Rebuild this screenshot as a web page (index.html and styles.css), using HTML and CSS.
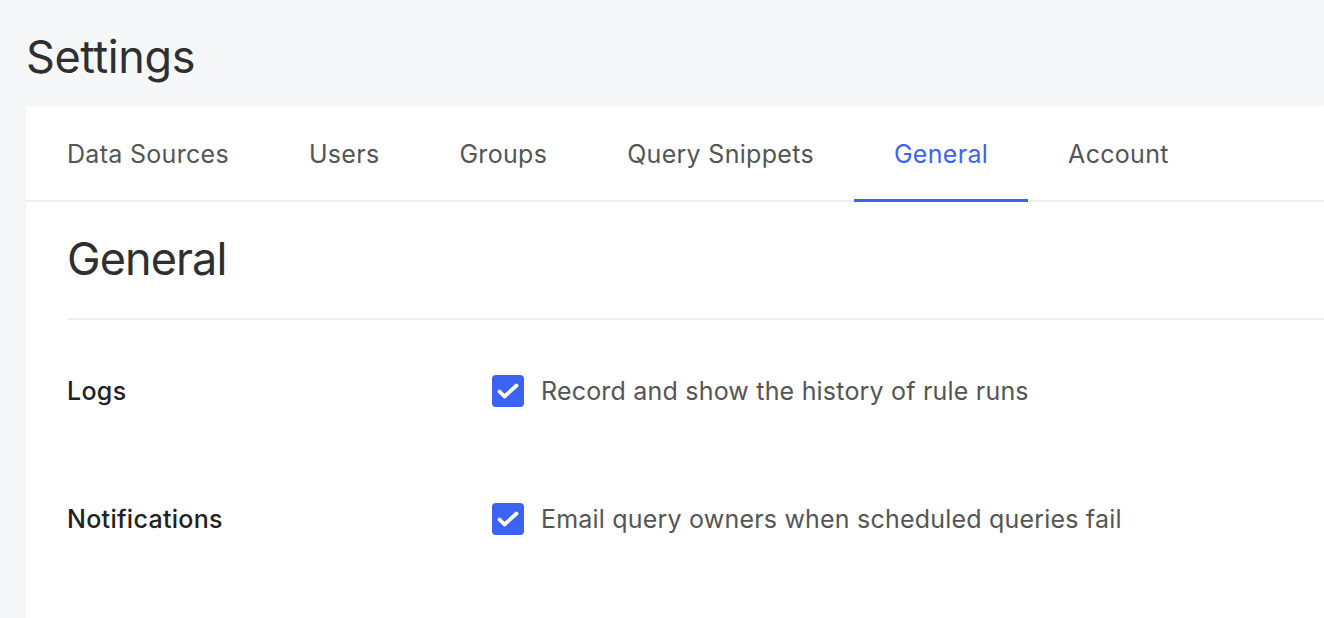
FILE: index.html
```html
<!DOCTYPE html>
<html lang="en">
<head>
<meta charset="utf-8">
<title>Settings</title>
<link rel="stylesheet" href="styles.css">
</head>
<body>
<div class="page">
  <h1 class="page-title">Settings</h1>
  <div class="card">
    <nav class="tabs">
      <a class="tab">Data Sources</a>
      <a class="tab">Users</a>
      <a class="tab">Groups</a>
      <a class="tab">Query Snippets</a>
      <a class="tab active">General</a>
      <a class="tab">Account</a>
    </nav>
    <div class="content">
      <h2 class="section-title">General</h2>
      <div class="rows">
        <div class="row">
          <div class="label">Logs</div>
          <label class="check">
            <span class="box"><svg viewBox="0 0 32 32" width="32" height="32"><path d="M7.5 16.5L12.5 21.5L24.5 10.5" fill="none" stroke="#fff" stroke-width="3.8" stroke-linecap="round" stroke-linejoin="round"/></svg></span>
            <span class="check-text">Record and show the history of rule runs</span>
          </label>
        </div>
        <div class="row">
          <div class="label">Notifications</div>
          <label class="check">
            <span class="box"><svg viewBox="0 0 32 32" width="32" height="32"><path d="M7.5 16.5L12.5 21.5L24.5 10.5" fill="none" stroke="#fff" stroke-width="3.8" stroke-linecap="round" stroke-linejoin="round"/></svg></span>
            <span class="check-text">Email query owners when scheduled queries fail</span>
          </label>
        </div>
      </div>
    </div>
  </div>
</div>
</body>
</html>
```
FILE: styles.css
```css
* { box-sizing: border-box; }
html, body { margin: 0; padding: 0; }
body {
  background: #f6f7f9;
  font-family: Inter, "Noto Sans", "Liberation Sans", sans-serif;
  color: #333;
  overflow: hidden;
  height: 618px;
}
.page {
  padding-left: 26px;
}
.page-title {
  margin: 0;
  padding: 30px 0 0 0;
  height: 106px;
  font-size: 45px;
  line-height: 54px;
  font-weight: 400;
  letter-spacing: -0.4px;
  color: #2f2f2f;
}
.card {
  background: #fff;
  height: 520px;
  box-shadow: -1px 0 2px rgba(0,0,0,0.03);
}
.tabs {
  display: flex;
  padding-left: 1px;
  height: 96px;
  border-bottom: 2px solid #eeeeee;
}
.tab {
  display: flex;
  align-items: center;
  padding: 3px 40px 0;
  font-size: 25px;
  letter-spacing: 0.3px;
  color: #555;
  margin-bottom: -2px;
  border-bottom: 3px solid transparent;
}
.tab.active {
  color: #3b63f5;
  border-bottom-color: #3b63f5;
}
.content {
  padding-left: 41px;
}
.section-title {
  margin: 0;
  padding-top: 30px;
  height: 118px;
  font-size: 45px;
  line-height: 54px;
  font-weight: 400;
  letter-spacing: -0.9px;
  color: #2f2f2f;
  border-bottom: 2px solid #eeeeee;
}
.rows {
  padding-top: 7px;
}
.row {
  display: flex;
  align-items: center;
  height: 128px;
}
.label {
  width: 425px;
  font-size: 25px;
  font-weight: 500;
  letter-spacing: 0.3px;
  color: #222;
}
.check {
  display: flex;
  align-items: center;
}
.box {
  width: 32px;
  height: 32px;
  border-radius: 4px;
  background: #3a63f3;
  display: flex;
  margin-right: 17px;
}
.check-text {
  font-size: 25px;
  letter-spacing: 0.2px;
  color: #555;
}
```
